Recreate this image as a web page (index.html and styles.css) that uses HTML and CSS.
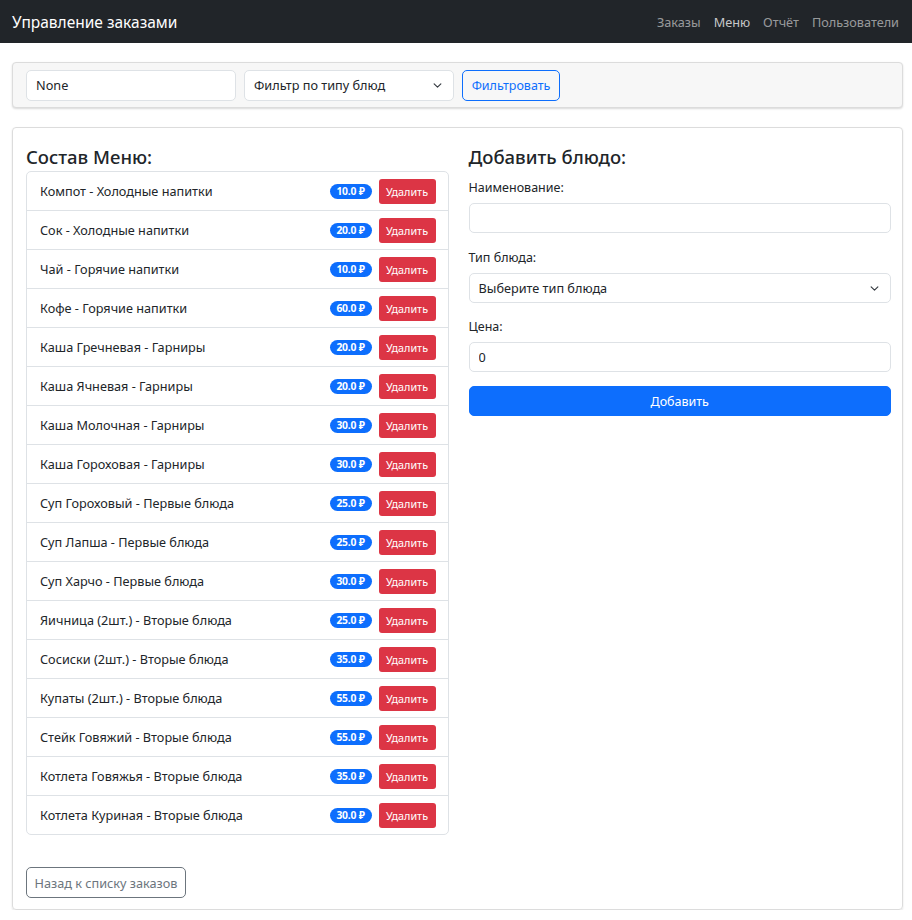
FILE: index.html
```html
<!DOCTYPE html>
<html lang="ru">
<head>
<meta charset="utf-8">
<title>Управление заказами</title>
<link rel="stylesheet" href="styles.css">
</head>
<body>
<nav class="navbar">
  <a class="brand" href="#">Управление заказами</a>
  <div class="nav-links">
    <a href="#">Заказы</a>
    <a href="#" class="active">Меню</a>
    <a href="#">Отчёт</a>
    <a href="#">Пользователи</a>
  </div>
</nav>
<main class="container">
  <form class="filter-card">
    <input class="control filter-input" type="text" value="None">
    <select class="control select filter-select"><option>Фильтр по типу блюд</option></select>
    <button type="button" class="btn btn-outline-primary">Фильтровать</button>
  </form>
  <section class="main-card">
    <div class="columns">
      <div class="col">
        <h4 class="heading">Состав Меню:</h4>
        <ul class="list">
          <li class="item"><span>Компот - Холодные напитки</span><span class="actions"><span class="badge">10.0 ₽</span><button class="btn-del">Удалить</button></span></li>
          <li class="item"><span>Сок - Холодные напитки</span><span class="actions"><span class="badge">20.0 ₽</span><button class="btn-del">Удалить</button></span></li>
          <li class="item"><span>Чай - Горячие напитки</span><span class="actions"><span class="badge">10.0 ₽</span><button class="btn-del">Удалить</button></span></li>
          <li class="item"><span>Кофе - Горячие напитки</span><span class="actions"><span class="badge">60.0 ₽</span><button class="btn-del">Удалить</button></span></li>
          <li class="item"><span>Каша Гречневая - Гарниры</span><span class="actions"><span class="badge">20.0 ₽</span><button class="btn-del">Удалить</button></span></li>
          <li class="item"><span>Каша Ячневая - Гарниры</span><span class="actions"><span class="badge">20.0 ₽</span><button class="btn-del">Удалить</button></span></li>
          <li class="item"><span>Каша Молочная - Гарниры</span><span class="actions"><span class="badge">30.0 ₽</span><button class="btn-del">Удалить</button></span></li>
          <li class="item"><span>Каша Гороховая - Гарниры</span><span class="actions"><span class="badge">30.0 ₽</span><button class="btn-del">Удалить</button></span></li>
          <li class="item"><span>Суп Гороховый - Первые блюда</span><span class="actions"><span class="badge">25.0 ₽</span><button class="btn-del">Удалить</button></span></li>
          <li class="item"><span>Суп Лапша - Первые блюда</span><span class="actions"><span class="badge">25.0 ₽</span><button class="btn-del">Удалить</button></span></li>
          <li class="item"><span>Суп Харчо - Первые блюда</span><span class="actions"><span class="badge">30.0 ₽</span><button class="btn-del">Удалить</button></span></li>
          <li class="item"><span>Яичница (2шт.) - Вторые блюда</span><span class="actions"><span class="badge">25.0 ₽</span><button class="btn-del">Удалить</button></span></li>
          <li class="item"><span>Сосиски (2шт.) - Вторые блюда</span><span class="actions"><span class="badge">35.0 ₽</span><button class="btn-del">Удалить</button></span></li>
          <li class="item"><span>Купаты (2шт.) - Вторые блюда</span><span class="actions"><span class="badge">55.0 ₽</span><button class="btn-del">Удалить</button></span></li>
          <li class="item"><span>Стейк Говяжий - Вторые блюда</span><span class="actions"><span class="badge">55.0 ₽</span><button class="btn-del">Удалить</button></span></li>
          <li class="item"><span>Котлета Говяжья - Вторые блюда</span><span class="actions"><span class="badge">35.0 ₽</span><button class="btn-del">Удалить</button></span></li>
          <li class="item"><span>Котлета Куриная - Вторые блюда</span><span class="actions"><span class="badge">30.0 ₽</span><button class="btn-del">Удалить</button></span></li>
        </ul>
      </div>
      <div class="col">
        <h4 class="heading">Добавить блюдо:</h4>
        <form class="add-form">
          <label class="label">Наименование:</label>
          <input class="control full" type="text">
          <label class="label">Тип блюда:</label>
          <select class="control select full"><option>Выберите тип блюда</option></select>
          <label class="label">Цена:</label>
          <input class="control full" type="text" value="0">
          <button type="button" class="btn btn-primary">Добавить</button>
        </form>
      </div>
    </div>
    <button type="button" class="btn btn-outline-secondary">Назад к списку заказов</button>
  </section>
</main>
</body>
</html>
```
FILE: styles.css
```css
* { box-sizing: border-box; }
body {
  margin: 0;
  font-family: "Noto Sans", "Open Sans", "DejaVu Sans", sans-serif;
  font-size: 12.7px;
  color: #212529;
  background: #fff;
}
a { text-decoration: none; }

.navbar {
  height: 43px;
  background: #212529;
  display: flex;
  align-items: center;
  justify-content: space-between;
  padding: 0 13px 0 12px;
}
.brand { color: #fff; font-size: 15.5px; font-weight: 400; }
.nav-links { display: flex; gap: 13px; }
.nav-links a { color: rgba(255,255,255,0.55); font-size: 12.7px; }
.nav-links a.active { color: rgba(255,255,255,0.75); }

.container { padding: 19px 9px 0 12px; }

.filter-card {
  display: flex;
  align-items: center;
  gap: 8px;
  height: 46px;
  padding: 0 13px;
  background: #f7f7f7;
  border: 1px solid #dcdcdc;
  border-radius: 4px;
  box-shadow: 0 1px 2px rgba(0,0,0,0.15);
  margin: 0;
}
.control {
  height: 31px;
  border: 1px solid #dee2e6;
  border-radius: 5px;
  background: #fff;
  font-family: inherit;
  font-size: 12.7px;
  color: #212529;
  padding: 0 9px;
  margin: 0;
}
.filter-input { width: 210px; }
.filter-select { width: 210px; }
.select {
  appearance: none;
  -webkit-appearance: none;
  padding-right: 30px;
  background-image: url("data:image/svg+xml,%3csvg xmlns='http://www.w3.org/2000/svg' viewBox='0 0 16 16'%3e%3cpath fill='none' stroke='%23343a40' stroke-linecap='round' stroke-linejoin='round' stroke-width='2' d='m2 5 6 6 6-6'/%3e%3c/svg%3e");
  background-repeat: no-repeat;
  background-position: right 10px center;
  background-size: 11px 9px;
}
.btn {
  height: 31px;
  border-radius: 5px;
  font-family: inherit;
  font-size: 12.5px;
  padding: 0 11px;
  background: transparent;
  cursor: pointer;
}
.btn-outline-primary { border: 1px solid #0d6efd; color: #0d6efd; width: 98px; padding: 0; }
.btn-primary { background: #0d6efd; border: 1px solid #0d6efd; color: #fff; width: 100%; height: 30px; }
.btn-outline-secondary { border: 1px solid #6c757d; color: #6c757d; width: 160px; padding: 0; font-size: 12.7px; margin-top: 32px; }

.main-card {
  margin-top: 19px;
  border: 1px solid #dcdcdc;
  border-radius: 4px;
  box-shadow: 0 1px 2px rgba(0,0,0,0.12);
  padding: 13px 11px 12px 13px;
  height: 783px;
}
.columns { display: flex; gap: 20px; }
.col { flex: 1; min-width: 0; }
.heading {
  margin: 4px 0 3px 0;
  font-size: 18.5px;
  font-weight: 500;
  line-height: 23px;
}
.list {
  list-style: none;
  margin: 0;
  padding: 0;
  border: 1px solid #dee2e6;
  border-radius: 5px;
}
.item {
  height: 39px;
  display: flex;
  align-items: center;
  justify-content: space-between;
  padding: 0 12px 0 13px;
  border-bottom: 1px solid #dee2e6;
}
.item:last-child { border-bottom: none; height: 38px; }
.actions { display: flex; align-items: center; gap: 7px; }
.badge {
  background: #0d6efd;
  color: #fff;
  font-weight: 700;
  font-size: 10.3px;
  line-height: 15px;
  height: 15px;
  padding: 0;
  border-radius: 8px;
  width: 42px;
  text-align: center;
  white-space: nowrap;
  letter-spacing: -0.2px;
}
.btn-del {
  background: #dc3545;
  border: none;
  color: #fff;
  border-radius: 3px;
  height: 25px;
  width: 57px;
  padding: 0;
  font-family: inherit;
  font-size: 10.8px;
}
.add-form { display: flex; flex-direction: column; padding-top: 7px; }
.label { line-height: 19px; margin-bottom: 6px; font-size: 12.5px; }
.full { width: 100%; height: 30px; margin-bottom: 15px; }
.add-form .full:last-of-type { margin-bottom: 14px; }
```
